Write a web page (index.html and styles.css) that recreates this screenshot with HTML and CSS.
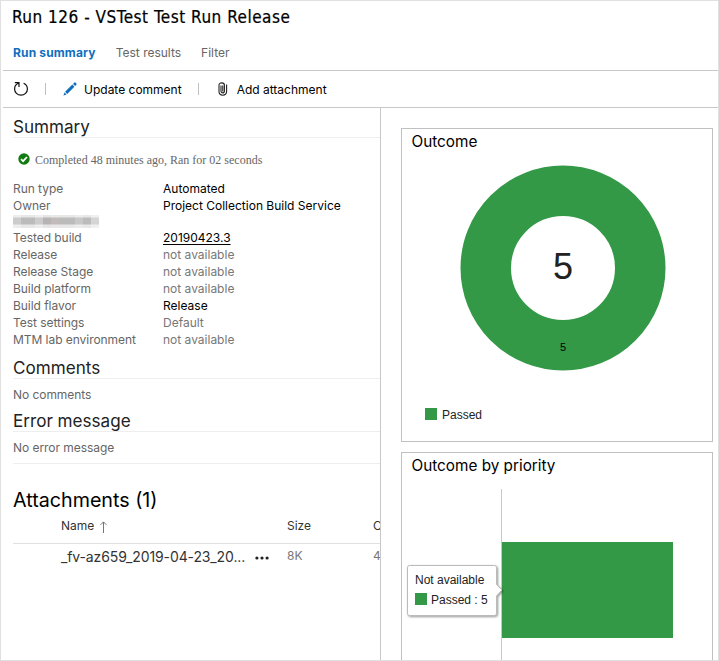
FILE: index.html
```html
<!DOCTYPE html>
<html lang="en">
<head>
<meta charset="utf-8">
<title>Run 126 - VSTest Test Run Release</title>
<link rel="stylesheet" href="styles.css">
</head>
<body>
<div class="window">
  <header>
    <h1>Run 126 - VSTest Test Run Release</h1>
    <nav class="tabs">
      <span class="tab active">Run summary</span>
      <span class="tab">Test results</span>
      <span class="tab">Filter</span>
    </nav>
  </header>
  <div class="toolbar">
    <svg class="refresh" width="16" height="16" viewBox="0 0 16 16" fill="none" stroke="#111" stroke-width="1.2"><path d="M1.8 1.7H6V6M5.6 2.2C2.9 3.1 1.6 5.3 1.6 7.9C1.6 11.4 4.4 14.2 8 14.2S14.4 11.4 14.4 7.9C14.4 5.3 12.8 3.2 10.6 2.2"/></svg>
    <span class="sep"></span>
    <svg class="pencil" width="14" height="14" viewBox="0 0 14 14" fill="#106ebe"><path d="M.4 13.6L1.5 10.4L3.6 12.5ZM2.1 9.8L9.3 2.6L11.4 4.7L4.2 11.9ZM10 1.9L11.2.7Q12 0 12.8.8L13.2 1.2Q14 2 13.3 2.8L12.1 4Z"/></svg>
    <span class="command update">Update comment</span>
    <span class="sep"></span>
    <svg class="clip" width="10" height="14" viewBox="0 0 10 14" fill="none" stroke="#222" stroke-width="1.1"><path d="M3 3.5V9.3C3 11.4 6.4 11.4 6.4 9.3V3C6.4 .1 1 .1 1 3V9.6C1 14.4 8.6 14.4 8.6 9.6V2.6M4.8 3.6V9.4"/></svg>
    <span class="command">Add attachment</span>
  </div>
  <div class="content">
    <main class="details">
      <h2>Summary</h2>
      <div class="status">
        <svg width="12" height="12" viewBox="0 0 12 12"><circle cx="6" cy="6" r="5.7" fill="#107c10"/><path d="M3 6.2L5.1 8.2L9 4" fill="none" stroke="#fff" stroke-width="1.7"/></svg>
        <span>Completed 48 minutes ago, Ran for 02 seconds</span>
      </div>
      <dl>
        <dt>Run type</dt><dd class="strong">Automated</dd>
        <dt>Owner</dt><dd class="strong">Project Collection Build Service</dd>
        <dt class="redacted"><span></span></dt><dd></dd>
        <dt>Tested build</dt><dd class="strong"><span class="link">20190423.3</span></dd>
        <dt>Release</dt><dd>not available</dd>
        <dt>Release Stage</dt><dd>not available</dd>
        <dt>Build platform</dt><dd>not available</dd>
        <dt>Build flavor</dt><dd class="strong">Release</dd>
        <dt>Test settings</dt><dd>Default</dd>
        <dt>MTM lab environment</dt><dd>not available</dd>
      </dl>
      <h2>Comments</h2>
      <p>No comments</p>
      <h2>Error message</h2>
      <p>No error message</p>
      <section class="attachments">
        <h3>Attachments (1)</h3>
        <div class="grid head">
          <span class="name">Name <svg width="7" height="12" viewBox="0 0 7 12" fill="none" stroke="#666" stroke-width=".9"><path d="M3.5 12V1M.6 3.8L3.5 .9L6.4 3.8"/></svg></span><span>Size</span><span>C</span>
        </div>
        <div class="grid row">
          <span class="file">_fv-az659_2019-04-23_20... <svg width="14" height="4" viewBox="0 0 14 4" fill="#222"><circle cx="1.9" cy="2" r="1.6"/><circle cx="7" cy="2" r="1.6"/><circle cx="12.1" cy="2" r="1.6"/></svg></span><span>8K</span><span>4</span>
        </div>
      </section>
    </main>
    <aside class="charts">
      <section class="card outcome">
        <h4>Outcome</h4>
        <div class="donut-wrap">
          <svg class="donut" width="206" height="206" viewBox="0 0 206 206">
            <circle cx="103" cy="103" r="77.25" fill="none" stroke="#339947" stroke-width="50.5"/>
            <text class="total" x="103" y="114" text-anchor="middle">5</text>
            <text class="slice" x="103" y="186" text-anchor="middle">5</text>
          </svg>
        </div>
        <div class="legend"><i></i><span>Passed</span></div>
      </section>
      <section class="card priority">
        <h4>Outcome by priority</h4>
        <div class="plot"><div class="bar"></div></div>
        <div class="tooltip">
          <svg class="bubble" width="104" height="60" viewBox="0 0 104 60"><path d="M5.5 3.5H90.5Q92.5 3.5 92.5 5.5V22.5L98 28L92.5 34V51.5Q92.5 53.5 90.5 53.5H5.5Q3.5 53.5 3.5 51.5V5.5Q3.5 3.5 5.5 3.5Z"/></svg>
          <div class="tip-text"><div>Not available</div><div class="tip-value"><i></i>Passed : 5</div></div>
        </div>
      </section>
    </aside>
  </div>
</div>
</body>
</html>
```
FILE: styles.css
```css
* { box-sizing: border-box; }
body { margin: 0; background: #fff; color: #000; font: 12px/17px Inter, sans-serif; }
h1, h2, h3, h4, p, dl, dd { margin: 0; font-weight: 400; }
svg { display: block; flex: none; }
.window { width: 719px; height: 661px; border: 1px solid #e0e0e0; overflow: hidden; display: flex; flex-direction: column; }
header { height: 70px; margin-left: 2px; padding: 3px 0 0 9px; border-bottom: 1px solid #c8c8c8; flex: none; }
h1 { font: 17px/26px "DejaVu Sans Condensed", "DejaVu Sans", sans-serif; font-stretch: condensed; letter-spacing: .5px; -webkit-text-stroke: .2px #000; }
.tabs { display: flex; gap: 20px; padding: 14px 0 0 1px; color: #666; }
.tab.active { color: #106ebe; font-weight: 700; letter-spacing: .15px; }
.toolbar { height: 37px; margin-left: 2px; padding: 0 0 0 10px; border-bottom: 1px solid #c8c8c8; display: flex; align-items: center; flex: none; }
.refresh { margin-right: 16px; }
.sep { width: 1px; height: 12px; background: #c0c0c0; }
.pencil { margin: 0 7px 0 17px; }
.update { margin-right: 16px; }
.clip { margin: 0 8.5px 0 19.5px; }
.content { flex: 1; min-height: 0; display: flex; }
.details { width: 380px; border-right: 1px solid #c8c8c8; padding: 6px 0 0 12px; overflow: hidden; flex: none; }
h2 { height: 24px; font-size: 17.1px; line-height: 25px; color: #222; border-bottom: 1px solid #eee; }
.status { height: 42px; padding: 0 0 0 5px; display: flex; align-items: center; gap: 5px; font: 12px/15px "Liberation Serif", serif; color: #666; }
.status svg { margin-left: -.5px; margin-right: .5px; }
.status span { padding-top: 2px; }
dl { display: grid; grid-template-columns: 150px 1fr; grid-auto-rows: 17px; grid-template-rows: 17px 17px 15px; color: #666; }
dt { letter-spacing: -.05px; }
dl + h2 { margin-top: 7px; }
dd { color: #777; white-space: nowrap; }
.strong { color: #000; }
.link { text-decoration: underline; text-underline-offset: 2px; }
.redacted { padding-top: 1px; }
.redacted span { display: block; width: 86px; height: 13px; background: linear-gradient(rgba(255,255,255,.65) 2px, transparent 3px 9px, rgba(255,255,255,.65) 10px), linear-gradient(90deg, #ccc 0 8px, #bbb 8px 22px, #ccc 22px 30px, #b8b4b4 30px 38px, #c3bbbb 38px 46px, #bbb 46px 62px, #c8c8c8 62px 70px, #bcbcbc 70px 78px, #d5d5d5 78px); }
p { height: 29px; padding-top: 7px; color: #666; letter-spacing: -.05px; }
p:last-of-type { height: 32px; border-bottom: 1px solid #eee; }
.attachments { padding-top: 22px; }
h3 { font-size: 19.7px; line-height: 28px; }
.grid { display: grid; grid-template-columns: 226px 86px 70px; align-items: start; padding-left: 48px; color: #333; }
.head { height: 30px; padding-top: 3px; border-bottom: 1px solid #e0e0e0; }
.name, .file { display: flex; align-items: center; }
.name { gap: 6px; }
.name svg { position: relative; top: 1px; }
.file { gap: 10px; font-size: 14px; letter-spacing: -.12px; color: #333; height: 19px; }
.file svg { position: relative; top: 1px; }
.row { padding-top: 3px; color: #777; }
.charts { flex: 1; padding: 20px 0 0 20px; }
.card { width: 312px; border: 1px solid #c0c0c0; position: relative; }
.outcome { height: 314px; margin-bottom: 10px; }
.priority { height: 240px; }
h4 { font-size: 15.3px; line-height: 20px; padding: 3px 0 0 9.5px; }
.donut-wrap { display: flex; padding: 13px 0 0 58px; }
.total { font: 36px "Liberation Sans", sans-serif; fill: #222; }
.slice { font: 11px "Liberation Sans", sans-serif; fill: #000; }
.legend { display: flex; align-items: center; gap: 5px; margin: 34px 0 0 23px; font: 12px/17px "Liberation Sans", sans-serif; color: #222; }
.legend span { padding-top: 2px; }
.legend i { margin-top: -1px; }
i { width: 12px; height: 12px; background: #339947; flex: none; }
.plot { margin: 13px 0 0 99px; height: 210px; border-left: 1px solid #c8c8c8; padding-top: 53px; }
.bar { width: 171px; height: 96px; background: #339947; }
.tooltip { position: absolute; left: 2px; top: 109px; font: 12px/17px "Liberation Sans", sans-serif; color: #222; }
.bubble path { fill: #fff; stroke: #bbb; filter: drop-shadow(1px 1px 1px #0006); }
.tip-text { position: absolute; left: 11px; top: 10px; white-space: nowrap; }
.tip-value { display: flex; align-items: center; gap: 4px; padding-top: 3px; }
.tip-value i { margin-top: -3px; }
```
